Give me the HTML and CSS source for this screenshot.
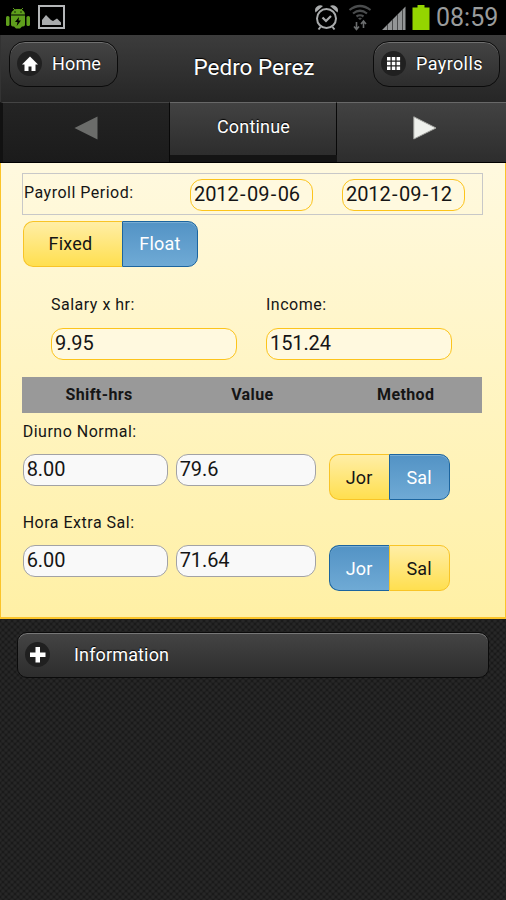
FILE: index.html
```html
<!DOCTYPE html>
<html lang="en">
<head>
<meta charset="utf-8">
<title>Pedro Perez</title>
<link rel="stylesheet" href="styles.css">
</head>
<body>
<div class="status">
  <svg class="status-left" width="70" height="35" viewBox="0 0 70 35">
    <g fill="#5f9f1c">
      <path d="M11 14.500c.3-3.600 3-5.500 7-5.500s6.700 1.900 7 5.500z"/>
      <path d="M11 15.500h14v9q0 2-2 2h-1l-2 2h-4l-2-2h-1q-2 0-2-2z"/>
      <rect x="6" y="16" width="3.500" height="10" rx="1.600"/>
      <rect x="26.500" y="16" width="3.500" height="10" rx="1.600"/>
    </g>
    <path d="M13 8l2 2M23 8l-2 2" stroke="#5f9f1c"/>
    <circle cx="15" cy="12" r=".7"/><circle cx="21" cy="12" r=".7"/>
    <path d="M19 17l-4 5h2.500l-.8 4 4.300-5.500h-2.500z"/>
    <path d="M39 6h25v22H39z" fill="none" stroke="#b4b6b8" stroke-width="2"/>
    <path d="M42 25v-5l4-5 5 5 2 1 4-2.500 4 4V25z" fill="#a9abad"/>
  </svg>
  <svg class="status-right" width="118" height="35" viewBox="0 0 118 35">
    <g fill="none" stroke="#a9abac" stroke-width="2">
      <circle cx="11.500" cy="18.500" r="9.500"/>
      <path d="M7.500 17.500l3.500 3.500 5-5" stroke-width="2.200"/>
      <path d="M5.500 27l-2 2.500M17.500 27l2 2.500"/>
    </g>
    <path d="M.5 12.500q-1.500-4 1.500-6t6-.5zM22.500 12.500q1.500-4-1.500-6t-6-.5z" fill="#a9abac"/>
    <g fill="none" stroke="#4a4c4d" stroke-width="2.200">
      <path d="M34.500 10q10.500-8 21 0M38 13.500q7-5.500 14 0M41.500 16.500q3.500-2.500 7 0"/>
    </g>
    <path d="M43 18.500l2 1.500 2-1.500-2-1z" fill="#4a4c4d"/>
    <path d="M41.500 22v7M39 26.500l2.500 3 2.500-3M48.500 28v-7M46 24l2.500-3 2.500 3" fill="none" stroke="#6b6d6e" stroke-width="1.600"/>
    <path d="M67 30l5-5v5zM72.500 30v-5.500l4.500-4.500v10zM77.500 30V19.500l4.500-4.500v15zM82.500 30V14.500l4.500-4.500v20zM87.500 30V9.500l3-3V30z" fill="#939596"/>
    <path d="M97.500 7.500h5V5h7v2.500h5V30h-17z" fill="#94d500"/>
  </svg>
  <span class="clock">08:59</span>
</div>

<header class="header">
  <a class="pill home"><span class="disc"><svg width="25" height="25" viewBox="0 0 25 25"><path d="M13 5.500l8 8h-2.500V20h-4v-4.500h-3V20h-4v-6.500H5z" fill="#fff"/></svg></span><span class="pill-text">Home</span></a>
  <h1>Pedro Perez</h1>
  <a class="pill payrolls"><span class="disc"><svg width="25" height="25" viewBox="0 0 25 25"><path d="M6 6h3.500v3.500H6zM10.800 6h3.500v3.500h-3.500zM15.600 6h3.500v3.500h-3.500zM6 10.800h3.500v3.500H6zM10.800 10.800h3.500v3.500h-3.500zM15.600 10.800h3.500v3.500h-3.500zM6 15.600h3.500v3.500H6zM10.800 15.600h3.500v3.500h-3.500zM15.600 15.600h3.500v3.500h-3.500z" fill="#fff"/></svg></span><span class="pill-text">Payrolls</span></a>
</header>

<nav class="nav">
  <a class="nav-item prev"><svg width="24" height="24" viewBox="0 0 24 24"><path d="M.5 12L23.500.5v23z" fill="#6b6c6a"/></svg></a>
  <a class="nav-item continue">Continue</a>
  <a class="nav-item next"><svg width="24" height="24" viewBox="0 0 24 24"><path d="M.8.8L23 12 .8 23z" fill="#eef0ec" stroke="#a3a4a0"/></svg></a>
</nav>

<main class="panel">
  <div class="period">
    <span class="label period-label">Payroll Period:</span>
    <span class="field">2012<i>-</i>09<i>-</i>06</span>
    <span class="field">2012<i>-</i>09<i>-</i>12</span>
  </div>
  <div class="toggle mode">
    <span class="option">Fixed</span><span class="option active">Float</span>
  </div>
  <div class="amounts">
    <span class="label">Salary x hr:</span><span class="label">Income:</span>
    <span class="field">9.95</span><span class="field">151.24</span>
  </div>
  <div class="table-head"><b>Shift-hrs</b><b>Value</b><b>Method</b></div>
  <section class="shift">
    <span class="label">Diurno Normal:</span>
    <div class="shift-row">
      <span class="field plain">8.00</span><span class="field plain">79.6</span>
      <div class="toggle"><span class="option">Jor</span><span class="option active">Sal</span></div>
    </div>
  </section>
  <section class="shift">
    <span class="label">Hora Extra Sal:</span>
    <div class="shift-row">
      <span class="field plain">6.00</span><span class="field plain">71.64</span>
      <div class="toggle"><span class="option active">Jor</span><span class="option">Sal</span></div>
    </div>
  </section>
</main>

<div class="info"><span class="disc"><svg width="25" height="25" viewBox="0 0 25 25"><path d="M10.500 5h4.500v5.500h5.500V15H15v5.500h-4.500V15H5v-4.500h5.500z" fill="#fff"/></svg></span><span class="info-text">Information</span></div>
</body>
</html>
```

FILE: styles.css
```css
* { box-sizing: border-box; }

body {
  margin: 0;
  height: 900px;
  overflow: hidden;
  font-family: Roboto, sans-serif;
  color: #151515;
  background-color: #1a1a1a;
  background-image:
    radial-gradient(ellipse at center, #272727 0 1px, transparent 2.500px),
    radial-gradient(ellipse at center, #272727 0 1px, transparent 2.500px);
  background-size: 6px 6px;
  background-position: 0 0, 3px 3px;
}

.status {
  display: flex;
  height: 35px;
  background: #000;
}
.status-right { margin-left: 245px; }
.clock {
  margin-left: 3px;
  line-height: 35px;
  font-size: 25px;
  color: #999b9c;
  white-space: nowrap;
}

.header {
  display: grid;
  grid-template-columns: 109px 1fr 127px;
  height: 67px;
  padding: 6px 6px 0 8px;
  background: linear-gradient(#3c3c3c, #262626);
  border-left: 1px solid #333;
  color: #fff;
  text-shadow: 0 -1px 1px #000;
}
.header h1 {
  margin: 0;
  padding-left: 17px;
  font-size: 22.500px;
  font-weight: 400;
  line-height: 52px;
  text-align: center;
}
.pill {
  display: flex;
  align-items: center;
  height: 46px;
  padding: 0 0 1px 7px;
  border: 1px solid #0b0b0b;
  border-radius: 16px;
  background: linear-gradient(#444, #2d2d2d);
  box-shadow: inset 0 1px 0 #707070;
  font-size: 18px;
  letter-spacing: .15px;
}
.disc {
  width: 25px;
  height: 25px;
  flex: none;
  border-radius: 50%;
  background: #202020;
}
.disc svg { display: block; }
.pill-text { margin-left: 10px; line-height: 44px; }
.payrolls .pill-text { letter-spacing: .4px; }

.nav {
  display: grid;
  grid-template-columns: 170px 167px 169px;
  height: 61px;
  border-bottom: 1px solid #000;
  background: #141414;
  color: #fff;
}
.nav-item {
  display: flex;
  justify-content: center;
  border-top: 1px solid #686868;
  border-right: 1px solid #080808;
  background: linear-gradient(#424242, #2d2d2d);
}
.nav-item svg { margin-top: 13px; }
.prev {
  border-left: 3px solid #111;
  border-top-color: #444;
  background: linear-gradient(#242424, #1b1b1b);
}
.continue {
  height: 53px;
  padding-left: 1px;
  font-size: 18px;
  letter-spacing: .2px;
  line-height: 48px;
  text-shadow: 0 -1px 1px #000;
}
.next { padding-left: 7px; border-right: 0; }

.panel {
  height: 456px;
  padding: 10px 22px 0 21px;
  border: 1px solid #fbc429;
  border-top: 0;
  border-bottom-width: 2px;
  background: linear-gradient(#fff9df, #fff0a5);
}
.label { font-size: 16px; letter-spacing: .5px; line-height: 20px; white-space: nowrap; }
.field {
  display: block;
  height: 32px;
  padding-left: 3px;
  border: 1px solid #fcc41c;
  border-radius: 12px;
  background: #fff9df;
  font-size: 20px;
  letter-spacing: -.1px;
  line-height: 29px;
  white-space: nowrap;
}
.field i { margin: 0 1.500px; font-style: normal; }
.plain { border-color: #a2a2a5; background: #f9f9f9; }

.period {
  display: grid;
  grid-template-columns: 166px 124px 152px;
  width: 461px;
  height: 42px;
  padding: 5px 0 0 1px;
  border: 1px solid #c8c8c8;
}
.period .field { width: 123.400px; }
.period .field + .field { margin-left: 28px; }
.period-label { line-height: 27px; }

.toggle { display: flex; height: 46px; }
.option {
  flex: 1;
  height: 46px;
  border: 1px solid #f8c427;
  background: linear-gradient(#ffeea6, #ffdf4f);
  font-size: 18px;
  letter-spacing: .2px;
  line-height: 45px;
  text-align: center;
}
.option:first-child { border-right: 0; border-radius: 10px 0 0 10px; }
.option:last-child { border-radius: 0 10px 10px 0; }
.option.active {
  border-color: #1c659f;
  background: linear-gradient(#5393c5, #6faad5);
  box-shadow: inset 0 1px 0 #79add3;
  color: #fff;
}
.mode { width: 175px; margin: 6px 0 0 1px; }
.mode .option { line-height: 44px; }
.mode .option:first-child { flex: none; width: 99px; padding-right: 5px; }

.amounts {
  display: grid;
  grid-template-columns: 187px 187px;
  grid-template-rows: 33px 32px;
  column-gap: 28px;
  margin: 28px 0 0 29px;
}
.amounts .field { width: 186.400px; }

.table-head {
  display: grid;
  grid-template-columns: repeat(3, 1fr);
  width: 460px;
  height: 36px;
  margin: 17px 0 0 .4px;
  background: #999;
  font-size: 16px;
  letter-spacing: .4px;
  line-height: 36px;
  text-align: center;
}
.table-head b { font-weight: 700; }

.shift { height: 91.300px; padding: 9px 0 0 .7px; }
.shift .label { display: block; height: 32px; }
.shift-row { display: grid; grid-template-columns: 145.500px 140.500px 121px; column-gap: 7.500px; }
.shift-row .toggle { margin-left: 5px; width: 121px; }

.info {
  display: flex;
  align-items: center;
  width: 472px;
  height: 46px;
  margin: 13px 0 0 17px;
  padding: 0 0 1px 7px;
  border: 1px solid #0b0b0b;
  border-radius: 10px;
  background: linear-gradient(#444, #2d2d2d);
  box-shadow: inset 0 1px 0 #777;
  color: #fff;
  font-size: 18px;
  letter-spacing: .15px;
  text-shadow: 0 -1px 1px #000;
}
.info-text { margin-left: 24px; }
```
